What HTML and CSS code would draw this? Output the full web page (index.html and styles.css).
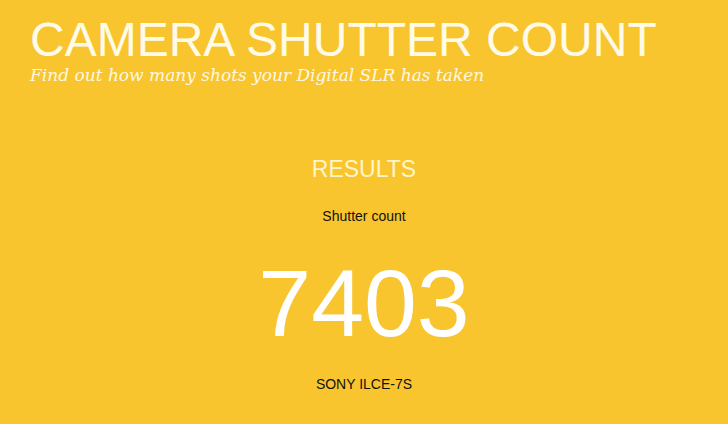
FILE: index.html
```html
<!DOCTYPE html>
<html>
<head>
<meta charset="utf-8">
<link rel="stylesheet" href="styles.css">
</head>
<body>
<header class="header">
  <h1 class="title">CAMERA SHUTTER COUNT</h1>
  <p class="subtitle">Find out how many shots your Digital SLR has taken</p>
</header>
<main class="results">
  <h2 class="results-title">RESULTS</h2>
  <p class="label">Shutter count</p>
  <div class="count">7403</div>
  <p class="model">SONY ILCE-7S</p>
</main>
</body>
</html>
```
FILE: styles.css
```css
html, body {
  margin: 0;
  padding: 0;
  background: #f9c52e;
  height: 100%;
  overflow: hidden;
}
body {
  font-family: "Liberation Sans", Arial, sans-serif;
}
.header {
  padding: 14px 0 0 30px;
}
.title {
  margin: 0;
  font-weight: normal;
  font-size: 48px;
  line-height: 52px;
  color: #fffbe8;
}
.subtitle {
  margin: 0;
  font-family: "DejaVu Serif", Georgia, serif;
  font-style: italic;
  font-size: 17px;
  line-height: 18px;
  color: #fff8e0;
}
.results {
  display: flex;
  flex-direction: column;
  align-items: center;
  padding-top: 71px;
}
.results-title {
  margin: 0;
  font-weight: normal;
  font-size: 23px;
  line-height: 28px;
  color: #fff5cc;
}
.label {
  margin: 25px 0 0;
  font-size: 14px;
  line-height: 16px;
  color: #111;
}
.count {
  margin-top: 24px;
  font-size: 95px;
  line-height: 110px;
  color: #fff;
}
.model {
  margin: 18px 0 0;
  font-size: 14px;
  line-height: 16px;
  color: #111;
}
```
